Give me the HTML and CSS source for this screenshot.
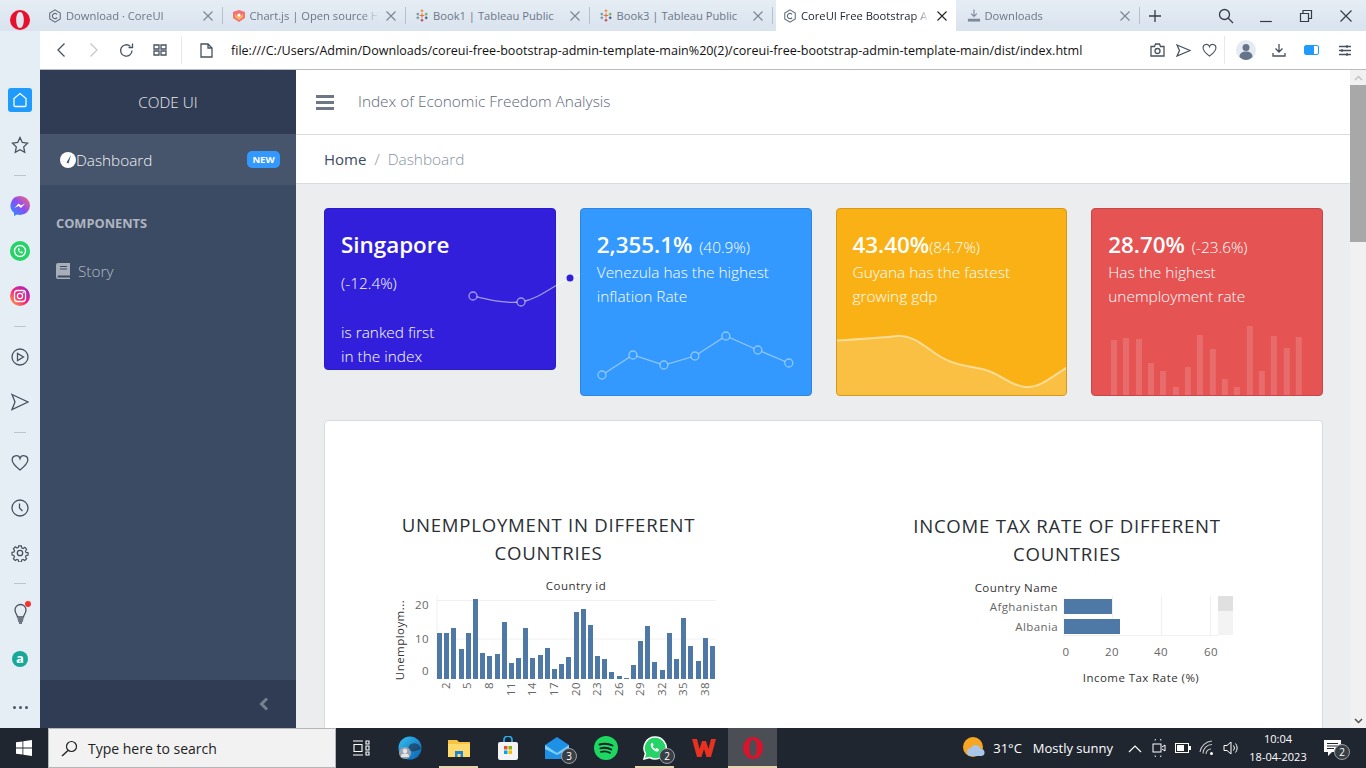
FILE: index.html
```html
<!DOCTYPE html>
<html lang="en">
<head>
    <meta charset="UTF-8">
    <meta name="viewport" content="width=device-width, initial-scale=1.0">
    <title>CoreUI Free Bootstrap Admin Template</title>
    <link rel="stylesheet" href="styles.css">
</head>
<body>
<div class="desktop">

    <!-- browser tabs -->
    <div class="tabbar">
        <div class="logo-slot">
            <svg width="20" height="20" viewBox="0 0 20 20"><path fill-rule="evenodd" fill="#e8112d" d="M10 0a10 10 0 1 0 0 20 10 10 0 0 0 0-20zm0 2c2.400 0 3.800 3.500 3.800 8s-1.400 8-3.800 8-3.800-3.500-3.800-8 1.400-8 3.800-8z"/></svg>
        </div>
        <div class="tab">
            <svg class="fav" width="16" height="16" viewBox="0 0 16 16"><path d="M8 1l6 3.500v7L8 15l-6-3.500v-7z" fill="none" stroke="#5f6b7a" stroke-width="1.200"/><path d="M10.400 6.200a3 3 0 1 0 0 3.600" fill="none" stroke="#5f6b7a" stroke-width="1.300"/></svg>
            <span class="tab-title">Download · CoreUI</span>
            <svg class="tab-x" width="10" height="10" viewBox="0 0 10 10"><path d="M.5.5l9 9M9.500.5l-9 9"/></svg>
        </div>
        <div class="tab">
            <svg class="fav" width="14" height="14" viewBox="0 0 14 14"><path d="M1 3l6-2 6 2v6l-6 4-6-4z" fill="#f27173"/><path d="M3 5l2 2 2-2 2 2 2-2v3l-4 3-4-3z" fill="#fdb45c"/><circle cx="7" cy="6" r="1.600" fill="#fff"/></svg>
            <span class="tab-title">Chart.js | Open source H</span>
            <svg class="tab-x" width="10" height="10" viewBox="0 0 10 10"><path d="M.5.5l9 9M9.500.5l-9 9"/></svg>
        </div>
        <div class="tab">
            <svg class="fav" width="15" height="15" viewBox="0 0 15 15"><path d="M7.500 1v3M6 2.500h3" stroke="#e8762d"/><path d="M7.500 5v5M5 7.500h5" stroke="#e8762d" stroke-width="1.200"/><path d="M7.500 11v3M6 12.500h3" stroke="#c72037"/><path d="M3 4.500v3M1.500 6h3M3 8.500v3M1.500 10h3" stroke="#5b879b"/><path d="M12 4.500v3M10.500 6h3" stroke="#59a14f"/><path d="M12 8.500v3M10.500 10h3" stroke="#1f447e"/></svg>
            <span class="tab-title tab-title-full">Book1 | Tableau Public</span>
            <svg class="tab-x" width="10" height="10" viewBox="0 0 10 10"><path d="M.5.5l9 9M9.500.5l-9 9"/></svg>
        </div>
        <div class="tab">
            <svg class="fav" width="15" height="15" viewBox="0 0 15 15"><path d="M7.500 1v3M6 2.500h3" stroke="#e8762d"/><path d="M7.500 5v5M5 7.500h5" stroke="#e8762d" stroke-width="1.200"/><path d="M7.500 11v3M6 12.500h3" stroke="#c72037"/><path d="M3 4.500v3M1.500 6h3M3 8.500v3M1.500 10h3" stroke="#5b879b"/><path d="M12 4.500v3M10.500 6h3" stroke="#59a14f"/><path d="M12 8.500v3M10.500 10h3" stroke="#1f447e"/></svg>
            <span class="tab-title tab-title-full">Book3 | Tableau Public</span>
            <svg class="tab-x" width="10" height="10" viewBox="0 0 10 10"><path d="M.5.5l9 9M9.500.5l-9 9"/></svg>
        </div>
        <div class="tab tab-active">
            <svg class="fav" width="16" height="16" viewBox="0 0 16 16"><path d="M8 1l6 3.500v7L8 15l-6-3.500v-7z" fill="none" stroke="#5f6b7a" stroke-width="1.200"/><path d="M10.400 6.200a3 3 0 1 0 0 3.600" fill="none" stroke="#5f6b7a" stroke-width="1.300"/></svg>
            <span class="tab-title">CoreUI Free Bootstrap Ac</span>
            <svg class="tab-x" width="10" height="10" viewBox="0 0 10 10"><path d="M.5.5l9 9M9.500.5l-9 9"/></svg>
        </div>
        <div class="tab">
            <svg class="fav" width="15" height="15" viewBox="0 0 15 15"><path d="M7.500 1v7M4.500 5.500l3 3 3-3" fill="none" stroke="#7d8a99" stroke-width="1.200"/><rect x="1" y="11" width="13" height="3" fill="#7d8a99"/></svg>
            <span class="tab-title">Downloads</span>
            <svg class="tab-x" width="10" height="10" viewBox="0 0 10 10"><path d="M.5.5l9 9M9.500.5l-9 9"/></svg>
        </div>
        <span class="tab-new">
            <svg width="14" height="14" viewBox="0 0 14 14"><path d="M7 1v12M1 7h12" stroke="#333c47" stroke-width="1.300"/></svg>
        </span>
        <div class="win-controls">
            <span class="win-btn"><svg width="16" height="16" viewBox="0 0 16 16"><circle cx="6.500" cy="6.500" r="5" fill="none" stroke="#333c47" stroke-width="1.300"/><path d="M10 10l5 5" stroke="#333c47" stroke-width="1.300"/></svg></span>
            <span class="win-btn"><svg width="14" height="14" viewBox="0 0 14 14"><path d="M1 12.500h12" stroke="#333c47" stroke-width="1.200"/></svg></span>
            <span class="win-btn"><svg width="14" height="14" viewBox="0 0 14 14"><path d="M1.500 4.500h8v8h-8zM4 4.500V1.500h8.500v8h-3" fill="none" stroke="#333c47" stroke-width="1.200"/></svg></span>
            <span class="win-btn"><svg width="14" height="14" viewBox="0 0 14 14"><path d="M1.500 1.500l11 11M12.500 1.500l-11 11" stroke="#333c47" stroke-width="1.200"/></svg></span>
        </div>
    </div>

    <!-- opera side rail -->
    <div class="rail">
        <span class="rail-item"><span class="rail-home"><svg width="16" height="16" viewBox="0 0 16 16"><path d="M8 1.500l6 5v7a1 1 0 0 1-1 1H3a1 1 0 0 1-1-1v-7z" fill="none" stroke="#fff" stroke-width="1.300"/></svg></span></span>
        <span class="rail-item"><svg width="18" height="18" viewBox="0 0 18 18"><path d="M9 1.500l2.300 5 5.200.7-3.800 3.700 1 5.400L9 13.700l-4.700 2.600 1-5.400L1.500 7.200l5.200-.7z" class="ico"/></svg></span>
        <span class="rail-sep"></span>
        <span class="rail-item"><svg width="20" height="20" viewBox="0 0 20 20"><defs><linearGradient id="msg" x1="0" y1="1" x2="1" y2="0"><stop offset="0" stop-color="#1e9bfc"/><stop offset=".5" stop-color="#8a4cf5"/><stop offset="1" stop-color="#ff6a6f"/></linearGradient></defs><path d="M10 0a10 9.500 0 0 1 0 19l-3-.4L4 20v-3.200A9.500 9.500 0 0 1 10 0z" fill="url(#msg)"/><path d="M4.500 12l4-4.500 2.500 2 4-2-4 4.500-2.500-2z" fill="#fff"/></svg></span>
        <span class="rail-item"><svg width="20" height="20" viewBox="0 0 20 20"><circle cx="10" cy="10" r="10" fill="#25d366"/><circle cx="10" cy="10" r="5.500" fill="none" stroke="#fff" stroke-width="1.400"/><path d="M7.800 7.500c0 3 2 4.800 4.600 5l.6-1.500-1.500-.8-.7.700c-.8-.4-1.300-1-1.600-1.700l.7-.7-.8-1.600z" fill="#fff"/></svg></span>
        <span class="rail-item"><svg width="20" height="20" viewBox="0 0 20 20"><defs><linearGradient id="ig" x1="0" y1="1" x2="1" y2="0"><stop offset="0" stop-color="#fdb03c"/><stop offset=".5" stop-color="#f0207f"/><stop offset="1" stop-color="#8a2fd8"/></linearGradient></defs><circle cx="10" cy="10" r="10" fill="url(#ig)"/><rect x="4.500" y="4.500" width="11" height="11" rx="3" fill="none" stroke="#fff" stroke-width="1.300"/><circle cx="10" cy="10" r="2.600" fill="none" stroke="#fff" stroke-width="1.300"/><circle cx="13.200" cy="6.800" r=".8" fill="#fff"/></svg></span>
        <span class="rail-sep"></span>
        <span class="rail-item"><svg width="18" height="18" viewBox="0 0 18 18"><circle cx="9" cy="9" r="8" class="ico"/><path d="M6.500 5.500v7l6-3.500z" class="ico"/></svg></span>
        <span class="rail-item"><svg width="18" height="18" viewBox="0 0 18 18"><path d="M1 1.500l16 7.500-16 7.500 3-7.500z" class="ico"/></svg></span>
        <span class="rail-sep"></span>
        <span class="rail-item"><svg width="18" height="18" viewBox="0 0 18 18"><path d="M9 16C4 12 1.200 9.500 1.200 6A4 4 0 0 1 9 4.500 4 4 0 0 1 16.800 6C16.800 9.500 14 12 9 16z" class="ico"/></svg></span>
        <span class="rail-item"><svg width="18" height="18" viewBox="0 0 18 18"><circle cx="9" cy="9" r="8" class="ico"/><path d="M8.500 4.500V9l3 3" class="ico"/></svg></span>
        <span class="rail-item"><svg width="18" height="18" viewBox="0 0 18 18"><circle cx="9" cy="9" r="2.700" class="ico"/><path d="M7.500 1h3l.4 2.300 1.500.7 2-1.300 2 2.200-1.300 1.900.6 1.500 2.300.5v2.500l-2.300.6-.6 1.500 1.300 1.900-2 2-2-1.200-1.500.6-.4 2.300h-3l-.4-2.300-1.500-.6-2 1.200-2-2 1.300-1.900-.6-1.500L.1 11V8.300l2.300-.5.6-1.500-1.300-1.900 2-2.200 2 1.300 1.500-.7z" class="ico" transform="translate(.9 .9) scale(.9)"/></svg></span>
        <span class="rail-sep"></span>
        <span class="rail-item rail-bulb"><svg width="16" height="22" viewBox="0 0 16 22"><path d="M5.500 14c0-2-2.500-3.500-2.500-7a5.500 5.500 0 0 1 11 0c0 3.500-2.500 5-2.500 7z" class="ico"/><path d="M5.500 16h6M6 18h5M7 20h3" class="ico"/></svg><span class="bulb-dot"></span></span>
        <span class="rail-item"><span class="rail-aria">a</span></span>
        <span class="rail-item rail-more"><span></span><span></span><span></span></span>
    </div>

    <!-- address bar -->
    <div class="addrbar">
        <span class="addr-btn"><svg width="10" height="16" viewBox="0 0 10 16"><path d="M8.500 1.500L2 8l6.500 6.500" class="ico"/></svg></span>
        <span class="addr-btn"><svg width="10" height="16" viewBox="0 0 10 16"><path d="M1.500 1.500L8 8l-6.500 6.500" fill="none" stroke="#c4c8cd" stroke-width="1.300"/></svg></span>
        <span class="addr-btn"><svg width="15" height="15" viewBox="0 0 15 15"><path d="M13 7.500a5.700 5.700 0 1 1-1.700-4.100" class="ico"/><path d="M13.500 .5v4h-4" class="ico"/></svg></span>
        <span class="addr-btn"><svg width="14" height="12" viewBox="0 0 14 12"><path d="M1 1h5v4H1zM8 1h5v4H8zM1 7h5v4H1zM8 7h5v4H8z" class="ico"/></svg></span>
        <span class="addr-sep"></span>
        <svg class="addr-file" width="13" height="15" viewBox="0 0 13 15"><path d="M1 1h7l4 4v9H1zM8 1v4h4" class="ico"/></svg>
        <span class="addr-url">file:///C:/Users/Admin/Downloads/coreui-free-bootstrap-admin-template-main%20(2)/coreui-free-bootstrap-admin-template-main/dist/index.html</span>
        <div class="addr-right">
            <span class="addr-small"><svg width="15" height="14" viewBox="0 0 15 14"><path d="M1 3.500h3.500L5.500 1h4l1 2.500H14V13H1z" class="ico"/><circle cx="7.500" cy="8" r="2.500" class="ico"/></svg></span>
            <span class="addr-small"><svg width="15" height="13" viewBox="0 0 15 13"><path d="M1 1l13 5.500L1 12l2.500-5.500z" class="ico"/></svg></span>
            <span class="addr-small"><svg width="15" height="14" viewBox="0 0 18 17"><path d="M9 16C4 12 1.200 9.500 1.200 6A4 4 0 0 1 9 4.500 4 4 0 0 1 16.800 6C16.800 9.500 14 12 9 16z" class="ico"/></svg></span>
            <span class="addr-sep addr-sep-right"></span>
            <span class="addr-btn"><svg width="20" height="20" viewBox="0 0 20 20"><circle cx="10" cy="10" r="10" fill="#e4ebf2"/><circle cx="10" cy="7.500" r="3.500" fill="#66748a"/><path d="M3.500 17c0-4 3-5.500 6.500-5.500s6.500 1.500 6.500 5.500c-2 2-4 3-6.500 3s-4.500-1-6.500-3z" fill="#66748a"/></svg></span>
            <span class="addr-btn"><svg width="14" height="14" viewBox="0 0 14 14"><path d="M7 1v8M3.500 5.500L7 9l3.500-3.500M1 10v3h12v-3" class="ico"/></svg></span>
            <span class="addr-btn"><span class="batt"><span class="batt-fill"></span></span></span>
            <span class="addr-btn"><svg width="14" height="13" viewBox="0 0 14 13"><path d="M1 2.500h12M1 6.500h12M1 10.500h12M9 1v3M4 5v3M9 9v3" class="ico"/></svg></span>
        </div>
    </div>

    <!-- the page itself -->
    <div class="page">
        <aside class="sidebar">
            <div class="brand">CODE UI</div>
            <a class="nav-active">
                <svg width="16" height="16" viewBox="0 0 16 16"><circle cx="8" cy="8" r="8" fill="#fff"/><path d="M11 3L6.500 10.500l2 1z" fill="#46546c"/></svg>
                <span class="nav-label">Dashboard</span>
                <span class="badge">NEW</span>
            </a>
            <div class="nav-title">COMPONENTS</div>
            <a class="nav-link">
                <svg width="14" height="16" viewBox="0 0 14 16"><path d="M2 0h12v12.500H2.500a1 1 0 0 0 0 2H14V16H2a2 2 0 0 1-2-2V2a2 2 0 0 1 2-2z" fill="#a8aeb8"/><path d="M4 3.500h7M4 6h7" stroke="#3c4b64" stroke-width="1.200"/></svg>
                <span>Story</span>
            </a>
            <div class="sidebar-foot">
                <svg width="10" height="14" viewBox="0 0 10 14"><path d="M8 1.500L2.500 7 8 12.500" fill="none" stroke="#76808f" stroke-width="3"/></svg>
            </div>
        </aside>

        <main class="main">
            <header class="topbar">
                <span class="burger"><i></i><i></i><i></i></span>
                <span class="topbar-title">Index of Economic Freedom Analysis</span>
            </header>
            <nav class="crumbs">
                <span class="crumb-home">Home</span>
                <span class="crumb-sep">/</span>
                <span class="crumb-now">Dashboard</span>
            </nav>

            <div class="content">
                <div class="stats">
                    <div class="stat stat-indigo">
                        <div class="stat-head">Singapore</div>
                        <p class="stat-change">(-12.4%)</p>
                        <p class="stat-rank">is ranked first<br>in the index</p>
                        <svg class="stat-float" width="130" height="60" viewBox="0 0 130 60">
                            <path d="M24 25C38 28 55 33 72 31 90 28 105 14 121 7L132 3" fill="none" stroke="rgba(255,255,255,.55)" stroke-width="1.300"/>
                            <circle cx="24" cy="25" r="4" fill="#321fdb" stroke="rgba(255,255,255,.55)" stroke-width="1.300"/>
                            <circle cx="72" cy="31" r="4" fill="#321fdb" stroke="rgba(255,255,255,.55)" stroke-width="1.300"/>
                            <circle cx="121" cy="7" r="3.500" fill="#321fdb"/>
                        </svg>
                    </div>

                    <div class="stat stat-blue">
                        <div class="stat-head">2,355.1% <small>(40.9%)</small></div>
                        <p>Venezula has the highest<br>inflation Rate</p>
                        <svg class="stat-chart" viewBox="0 0 232 70" preserveAspectRatio="none">
                            <path d="M22 49L53 29 84 39 115 30 146 10 178 24 209 37" fill="none" stroke="rgba(255,255,255,.45)" stroke-width="1.300"/>
                            <g fill="#39f" stroke="rgba(255,255,255,.45)" stroke-width="1.300">
                                <circle cx="22" cy="49" r="4"/><circle cx="53" cy="29" r="4"/><circle cx="84" cy="39" r="4"/><circle cx="115" cy="30" r="4"/><circle cx="146" cy="10" r="4"/><circle cx="178" cy="24" r="4"/><circle cx="209" cy="37" r="4"/>
                            </g>
                        </svg>
                    </div>

                    <div class="stat stat-amber">
                        <div class="stat-head">43.40%<small class="tight">(84.7%)</small></div>
                        <p>Guyana has the fastest<br>growing gdp</p>
                        <svg class="stat-chart" viewBox="0 0 232 70" preserveAspectRatio="none">
                            <path d="M0 14.500C25 13 45 12 60 10 78 8 90 22 105 31 120 40 135 40 150 44 165 48 175 60 190 61 205 62 218 49 232 41V70H0z" fill="rgba(255,255,255,.2)"/>
                            <path d="M0 14.500C25 13 45 12 60 10 78 8 90 22 105 31 120 40 135 40 150 44 165 48 175 60 190 61 205 62 218 49 232 41" fill="none" stroke="rgba(255,255,255,.5)" stroke-width="2"/>
                        </svg>
                    </div>

                    <div class="stat stat-red">
                        <div class="stat-head">28.70% <small>(-23.6%)</small></div>
                        <p>Has the highest<br>unemployment rate</p>
                        <svg class="stat-chart" viewBox="0 0 232 70" preserveAspectRatio="none">
                            <path fill="rgba(255,255,255,.15)" d="M20 14h6v56h-6zM32 12h6v58h-6zM45 13h6v57h-6zM57 37h6v33h-6zM69 45h6v25h-6zM82 61h6v9h-6zM94 41h6v29h-6zM106 9h6v61h-6zM119 23h6v47h-6zM131 53h6v17h-6zM143 61h6v9h-6zM156 0h6v70h-6zM168 45h6v25h-6zM180 10h6v60h-6zM193 22h6v48h-6zM205 11h6v59h-6z"/>
                        </svg>
                    </div>
                </div>

                <section class="panel">
                    <div class="panel-col">
                        <h3 class="chart-title">UNEMPLOYMENT IN DIFFERENT COUNTRIES</h3>
                        <svg class="chart chart-left" width="350" height="130" viewBox="0 0 350 130">
                            <path d="M57 25v84M57 30.500h279M57 69h279" fill="none" stroke="#f0f0f0"/>
                            <path fill="#4e79a7" d="M57 63h5v46h-5zM64 63h5v46h-5zM71 58h5v51h-5zM79 79h5v30h-5zM86 63h5v46h-5zM93 29h5v80h-5zM100 83h5v26h-5zM107 86h5v23h-5zM115 84h5v25h-5zM122 52h5v57h-5zM129 93h5v16h-5zM136 88h5v21h-5zM143 58h5v51h-5zM150 88h5v21h-5zM158 85h5v24h-5zM165 78h5v31h-5zM172 99h5v10h-5zM179 94h5v15h-5zM186 87h5v22h-5zM194 42h5v67h-5zM201 39h5v70h-5zM208 55h5v54h-5zM215 86h5v23h-5zM222 89h5v20h-5zM229 102h5v7h-5zM237 106h5v3h-5zM244 108h5v1h-5zM251 95h5v14h-5zM258 71h5v38h-5zM265 56h5v53h-5zM272 92h5v17h-5zM280 100h5v9h-5zM287 63h5v46h-5zM294 89h5v20h-5zM301 48h5v61h-5zM308 76h5v33h-5zM316 91h5v18h-5zM323 68h5v41h-5zM330 76h5v33h-5z"/>
                            <text class="axis-title" x="196" y="20" text-anchor="middle">Country id</text>
                            <g class="axis-tick" text-anchor="end">
                                <text x="49" y="39">20</text>
                                <text x="49" y="73">10</text>
                                <text x="49" y="105">0</text>
                            </g>
                            <text class="axis-title" transform="translate(24 70) rotate(-90)" text-anchor="middle">Unemploym...</text>
                            <g class="axis-tick" text-anchor="end">
                                <text transform="translate(70 112) rotate(-90)">2</text>
                                <text transform="translate(91 112) rotate(-90)">5</text>
                                <text transform="translate(113 112) rotate(-90)">8</text>
                                <text transform="translate(135 112) rotate(-90)">11</text>
                                <text transform="translate(156 112) rotate(-90)">14</text>
                                <text transform="translate(178 112) rotate(-90)">17</text>
                                <text transform="translate(200 112) rotate(-90)">20</text>
                                <text transform="translate(221 112) rotate(-90)">23</text>
                                <text transform="translate(243 112) rotate(-90)">26</text>
                                <text transform="translate(264 112) rotate(-90)">29</text>
                                <text transform="translate(286 112) rotate(-90)">32</text>
                                <text transform="translate(307 112) rotate(-90)">35</text>
                                <text transform="translate(329 112) rotate(-90)">38</text>
                            </g>
                        </svg>
                    </div>
                    <div class="panel-col">
                        <h3 class="chart-title">INCOME TAX RATE OF DIFFERENT COUNTRIES</h3>
                        <svg class="chart chart-right" width="290" height="130" viewBox="0 0 290 130">
                            <path d="M104 26v43M152.500 26v40M201.500 26v40M250.500 26v40M104 65.500h154" fill="none" stroke="#f0f0f0"/>
                            <rect x="104" y="29" width="48" height="15" fill="#4e79a7"/>
                            <rect x="104" y="49" width="56" height="15" fill="#4e79a7"/>
                            <rect x="258" y="26" width="15" height="15" fill="#e0e0e0"/>
                            <rect x="258" y="41" width="15" height="24" fill="#f3f3f3"/>
                            <text class="axis-title" x="98" y="22" text-anchor="end">Country Name</text>
                            <g class="axis-tick" text-anchor="end">
                                <text x="98" y="41">Afghanistan</text>
                                <text x="98" y="61">Albania</text>
                            </g>
                            <g class="axis-tick" text-anchor="middle">
                                <text x="106" y="86">0</text>
                                <text x="152" y="86">20</text>
                                <text x="201" y="86">40</text>
                                <text x="251" y="86">60</text>
                            </g>
                            <text class="axis-title" x="181" y="112" text-anchor="middle">Income Tax Rate (%)</text>
                        </svg>
                    </div>
                </section>
            </div>
        </main>

        <div class="scrollbar">
            <span class="scroll-arrow"><svg width="9" height="6" viewBox="0 0 9 6"><path d="M1 5l3.500-3.500L8 5" fill="none" stroke="#c4c4c4" stroke-width="1.500"/></svg></span>
            <span class="scroll-thumb"></span>
            <span class="scroll-arrow scroll-down"><svg width="9" height="6" viewBox="0 0 9 6"><path d="M1 1l3.500 3.500L8 1" fill="none" stroke="#505050" stroke-width="1.500"/></svg></span>
        </div>
    </div>

    <!-- windows taskbar -->
    <footer class="taskbar">
        <span class="start"><svg width="16" height="16" viewBox="0 0 16 16"><path fill="#fff" d="M0 2.300L6.500 1.400v6.200H0zM7.300 1.300L16 0v7.600H7.300zM0 8.400h6.500v6.200L0 13.700zM7.300 8.400H16V16l-8.700-1.300z"/></svg></span>
        <div class="search">
            <svg width="17" height="17" viewBox="0 0 17 17"><circle cx="10.500" cy="6.500" r="5" fill="none" stroke="#222" stroke-width="1.200"/><path d="M7 10.500L1 16" stroke="#222" stroke-width="1.400"/></svg>
            <span>Type here to search</span>
        </div>
        <span class="task"><svg width="18" height="16" viewBox="0 0 18 16"><path d="M1 1h10M1 15h10M2 4.500h8v7H2zM14 1h3v3h-3zM14 6h3v4h-3zM14 12h3v3h-3z" fill="none" stroke="#fff" stroke-width="1.100"/></svg></span>
        <span class="task"><svg width="24" height="24" viewBox="0 0 24 24"><defs><linearGradient id="edge" x1="0" y1="0" x2="1" y2="1"><stop offset="0" stop-color="#35c1f1"/><stop offset="1" stop-color="#0a5fb4"/></linearGradient></defs><circle cx="12" cy="12" r="11.500" fill="url(#edge)"/><path d="M23 13c-1-5-6-7-10-5-3 1.500-3 5-1 6.500 3 2 6 .5 11-1.500z" fill="#1b2531" opacity=".55"/><circle cx="7" cy="17" r="6" fill="#9aa3ad"/><circle cx="7" cy="15" r="2.300" fill="#e3e6ea"/><path d="M3 21c0-3 2-3.500 4-3.500s4 .5 4 3.500z" fill="#e3e6ea"/></svg></span>
        <span class="task task-open"><svg width="22" height="20" viewBox="0 0 22 20"><path d="M0 2h9l2 2h11v15H0z" fill="#f6c343"/><path d="M0 6h22v13H0z" fill="#ffdb6e"/><path d="M7 19v-6h8v6h-2.500v-3h-3v3z" fill="#1f83d6"/></svg></span>
        <span class="task"><svg width="22" height="24" viewBox="0 0 22 24"><path d="M7 7V4a4 4 0 0 1 8 0v3" fill="none" stroke="#28a8ea" stroke-width="1.800"/><rect x="1" y="6" width="20" height="18" rx="2" fill="#f4f4f4"/><path fill="#f25022" d="M7 10h3.500v3.500H7z"/><path fill="#7fba00" d="M11.500 10H15v3.500h-3.500z"/><path fill="#00a4ef" d="M7 14.500h3.500V18H7z"/><path fill="#ffb900" d="M11.500 14.500H15V18h-3.500z"/></svg></span>
        <span class="task"><svg width="24" height="22" viewBox="0 0 24 22"><path d="M12 0l12 8v14H0V8z" fill="#1e90e6"/><path d="M0 8l12 8 12-8v4l-12 6-12-6z" fill="#7fd0fa"/></svg><b class="task-count">3</b></span>
        <span class="task"><svg width="24" height="24" viewBox="0 0 24 24"><circle cx="12" cy="12" r="12" fill="#1ed760"/><path d="M5.500 8.500c4.500-1.200 9-1 13 1M6.300 12.300c4-1 7.500-.8 11 1.200M7 15.800c3-.8 6-.6 8.800 1" fill="none" stroke="#15202b" stroke-width="1.900" stroke-linecap="round"/></svg></span>
        <span class="task task-open"><svg width="24" height="24" viewBox="0 0 24 24"><path d="M12 1a11 11 0 0 0-9.500 16.500L1 23l5.700-1.500A11 11 0 1 0 12 1z" fill="#25d366" stroke="#fff" stroke-width="1.500"/><path d="M8.500 7c-1.500 1.500-.8 4 1 6s4.500 3.500 6 2l.5-1.800-2.500-1.200-1 1c-1.300-.5-2.300-1.500-2.800-2.800l1-1-1.200-2.500z" fill="#fff"/></svg><b class="task-count">2</b></span>
        <span class="task"><svg width="24" height="20" viewBox="0 0 24 20"><path d="M0 1h5l2.500 10L10 3h4l2.500 8L19 1h5l-5 18h-4.500L12 11l-2.500 8H5z" fill="#e8321f"/></svg></span>
        <span class="task task-current"><svg width="20" height="24" viewBox="0 0 20 24"><path fill-rule="evenodd" fill="#d8132b" d="M10 1a10 11 0 1 0 0 22 10 11 0 0 0 0-22zm0 2.500c2.200 0 3.600 3.800 3.600 8.500s-1.400 8.500-3.600 8.500-3.600-3.800-3.600-8.500 1.400-8.500 3.600-8.500z"/></svg></span>

        <div class="tray">
            <svg class="tray-weather" width="24" height="24" viewBox="0 0 24 24"><circle cx="11" cy="11" r="10" fill="#f6a623"/><path d="M9 20a4 4 0 0 1 0-8 5 5 0 0 1 9.500 1 3.500 3.500 0 0 1 1 7z" fill="#a9c6e8"/></svg>
            <span class="tray-temp">31°C</span>
            <span class="tray-text">Mostly sunny</span>
            <span class="tray-icon"><svg width="14" height="9" viewBox="0 0 14 9"><path d="M1 8l6-6 6 6" fill="none" stroke="#fff" stroke-width="1.200"/></svg></span>
            <span class="tray-icon"><svg width="14" height="18" viewBox="0 0 14 18"><path d="M3 1.500a3 3 0 0 1 6 0M3 16.500a3 3 0 0 0 6 0" fill="none" stroke="#fff"/><rect x="1" y="5" width="8" height="8" fill="none" stroke="#fff"/><path d="M10 8l3-2v6l-3-2" fill="none" stroke="#fff"/></svg></span>
            <span class="tray-icon"><svg width="16" height="10" viewBox="0 0 16 10"><rect x=".5" y=".5" width="13" height="9" fill="none" stroke="#fff"/><rect x="2" y="2" width="7" height="6" fill="#fff"/><rect x="14" y="3" width="2" height="4" fill="#fff"/></svg></span>
            <span class="tray-icon"><svg width="16" height="16" viewBox="0 0 16 16"><path d="M1 12A13 13 0 0 1 13 1M4 13.500A9 9 0 0 1 13 4.500M7 14a5 5 0 0 1 5-5" fill="none" stroke="#c8c8c8" stroke-width="1.100"/><circle cx="12.500" cy="13.500" r="1.500" fill="#fff"/></svg></span>
            <span class="tray-icon"><svg width="17" height="14" viewBox="0 0 17 14"><path d="M1 4.500h3L8 1v12L4 9.500H1z" fill="none" stroke="#fff"/><path d="M10.500 4.500a4 4 0 0 1 0 5M12.500 2.500a7 7 0 0 1 0 9" fill="none" stroke="#fff"/></svg></span>
            <div class="clock"><span>10:04</span><span>18-04-2023</span></div>
            <span class="notif"><svg width="18" height="17" viewBox="0 0 18 17"><path d="M0 0h17v12H8l-4 4v-4H0z" fill="#fff"/><path d="M3 3.500h11M3 6h11M3 8.500h7" stroke="#1f2630"/></svg><b class="task-count">2</b></span>
        </div>
    </footer>
</div>
</body>
</html>
```

FILE: styles.css
```css
* { box-sizing: border-box; }
html, body { margin: 0; height: 100%; overflow: hidden; }
body { font-family: "Open Sans", "Noto Sans", sans-serif; color: #3c4b64; }
svg { display: block; flex: none; }
.ico { fill: none; stroke: #48525f; stroke-width: 1.3; }

.desktop { display: grid; grid-template-columns: 40px 1fr; grid-template-rows: 31px 39px 1fr 40px; height: 768px; }

/* tabs */
.tabbar { grid-column: 1 / -1; display: flex; align-items: stretch; background: linear-gradient(#e6edf4, #d9e3ee); font-size: 11.2px; }
.logo-slot { width: 40px; flex: none; display: flex; align-items: center; justify-content: center; padding-top: 8px; }
.tab { flex: 0 0 183.5px; min-width: 0; display: flex; align-items: center; gap: 4px; padding-left: 8px; padding-right: 11px; color: #6b7787; position: relative; }
.tab::after { content: ""; position: absolute; right: 1px; top: 7px; bottom: 7px; width: 1px; background: #b6bfca; }
.fav { width: 14px; }
.tab-title { flex: 1; min-width: 0; white-space: nowrap; -webkit-mask-image: linear-gradient(to right, #000 88%, transparent); mask-image: linear-gradient(to right, #000 88%, transparent); }
.tab-title-full { -webkit-mask-image: none; mask-image: none; }
.tab-x { fill: none; stroke: #7a8592; stroke-width: 1.1; margin-left: 4px; }
.tab-active { background: #fff; color: #20262d; margin: 0 1.500px 0 2px; flex-basis: 180px; padding-left: 7px; padding-right: 9px; }
.tab-active::after { display: none; }
.tab-active .tab-x { stroke: #222; }
.tab:nth-child(7) { padding-left: 9px; }
.tab-new { width: 28px; display: flex; align-items: center; justify-content: center; }
.win-controls { margin-left: auto; display: flex; }
.win-btn { width: 40px; display: flex; align-items: center; justify-content: center; }

/* rail */
.rail { grid-row: 2 / 4; background: #e5edf5; display: flex; flex-direction: column; padding-top: 46px; }
.rail-item { height: 45px; flex: none; display: flex; align-items: center; justify-content: center; position: relative; }
.rail-sep { height: 16px; flex: none; position: relative; }
.rail-sep::after { content: ""; position: absolute; left: 14px; width: 12px; top: 8px; height: 1px; background: #bcc6d1; }
.rail-home { width: 24px; height: 24px; border-radius: 3px; background: #1e9bfc; display: flex; align-items: center; justify-content: center; }
.bulb-dot { position: absolute; left: 25px; top: 10px; width: 6px; height: 6px; border-radius: 50%; background: #f9302f; }
.rail-aria { width: 16px; height: 16px; border-radius: 50%; background: #17a89a; color: #fff; font-size: 13px; font-weight: 700; line-height: 14px; text-align: center; }
.rail-more { margin-top: auto; height: 42px; gap: 3px; }
.rail-more span { width: 3px; height: 3px; border-radius: 50%; background: #4b5563; }

/* address bar */
.addrbar { background: #fff; border-bottom: 1px solid #b8bcc2; display: flex; align-items: center; padding: 0 5px 0 4px; }
.addr-btn { width: 33px; display: flex; align-items: center; justify-content: center; }
.addr-small { width: 26px; display: flex; align-items: center; justify-content: center; }
.addr-sep { width: 1px; height: 28px; background: #e6e8eb; margin-left: 5px; }
.addr-file { margin-left: 18px; }
.addr-url { margin-left: 18px; font-size: 12.55px; color: #111; white-space: nowrap; }
.addr-right { margin-left: auto; display: flex; align-items: center; }
.addr-sep-right { margin: 0 4px 0 2px; }
.batt { width: 15px; height: 10px; border-radius: 2px; background: #fff; border: 1px solid #1e9bfc; display: block; position: relative; }
.batt-fill { display: block; width: 9px; height: 8px; background: #1e9bfc; }

/* coreui page */
.page { display: flex; overflow: hidden; min-height: 0; }
.sidebar { width: 256px; flex: none; background: #3c4b64; color: #fff; display: flex; flex-direction: column; }
.brand { height: 64px; flex: none; background: #303c54; display: flex; align-items: center; justify-content: center; font-size: 15.3px; font-weight: 300; color: #e8eaee; }
.nav-active { height: 51px; flex: none; background: #46546c; display: flex; align-items: center; padding: 0 16px 0 20px; font-size: 15.3px; font-weight: 300; color: #f2f3f5; }
.nav-label { flex: 1; }
.badge { background: #39f; border-radius: 5px; color: #fff; font-size: 9.5px; font-weight: 700; height: 17px; width: 33px; text-align: center; line-height: 17px; }
.nav-title { font-size: 12.8px; font-weight: 700; color: rgba(255, 255, 255, .6); padding: 30px 16px 0; line-height: 17px; }
.nav-link { display: flex; align-items: center; gap: 8px; padding: 28px 16px 0; font-size: 15.3px; font-weight: 300; color: rgba(255, 255, 255, .62); line-height: 22px; }
.sidebar-foot { margin-top: auto; height: 48px; flex: none; background: #303c54; display: flex; align-items: center; justify-content: flex-end; padding-right: 27px; }

.main { flex: 1; min-width: 0; background: #ebedef; overflow: hidden; }
.topbar { height: 65px; background: #fff; border-bottom: 1px solid #d8dbe0; display: flex; align-items: center; padding: 0 0 1px 20px; }
.burger { width: 18px; display: flex; flex-direction: column; gap: 3px; padding-top: 1px; }
.burger i { height: 3px; background: #6d7786; display: block; }
.topbar-title { margin-left: 24px; font-size: 15.4px; font-weight: 300; color: #5c6778; }
.crumbs { height: 49px; background: #fff; border-bottom: 1px solid #d8dbe0; display: flex; align-items: center; gap: 8px; padding: 0 28px; font-size: 15.4px; font-weight: 300; }
.crumb-home { color: #3c4b64; font-weight: 400; font-size: 15px; }
.crumb-sep, .crumb-now { color: #8a93a2; }

.content { padding: 24px 27px 0 28px; }
.stats { display: grid; grid-template-columns: repeat(4, 1fr); gap: 24px; align-items: start; }
.stat { height: 188px; border-radius: 4px; border: 1px solid; color: #fff; padding: 20px 16px 0; position: relative; display: flex; flex-direction: column; overflow: hidden; }
.stat p { margin: 0; font-size: 15.4px; font-weight: 300; line-height: 24px; }
.stat-head { height: 32px; flex: none; font-size: 22.4px; font-weight: 600; line-height: 32px; white-space: nowrap; }
.stat-head small { font-size: 15.4px; font-weight: 300; margin-left: 1px; }
.stat-head small.tight { margin-left: 0; }
.stat-chart { width: calc(100% + 34px); height: 70px; margin: auto -17px -1px; }
.stat-indigo { background: #321fdb; border-color: #2c1cc4; height: 162px; overflow: visible; }
.stat .stat-change { margin-top: 11px; }
.stat .stat-rank { margin-top: 25px; }
.stat-float { position: absolute; left: 124px; top: 62px; overflow: visible; }
.stat-blue { background: #39f; border-color: #2d86e0; }
.stat-amber { background: #f9b115; border-color: #d19a1c; }
.stat-red { background: #e55353; border-color: #c4474c; }

.panel { margin-top: 24px; background: #fff; border: 1px solid #d8dbe0; border-radius: 4px; height: 500px; display: grid; grid-template-columns: 447px 512px; column-gap: 39px; padding-top: 90px; }
.chart-title { margin: 0 auto 3px; width: 340px; text-align: center; font-size: 18.6px; font-weight: 400; letter-spacing: .75px; line-height: 28px; color: #2a2f36; }
.panel-col:last-child .chart-title { margin-top: 1px; margin-bottom: 2px; }
.chart-left { margin-left: 55px; }
.chart-right { margin-left: 149px; }
.axis-title { font-size: 11.5px; fill: #333; letter-spacing: .45px; }
.axis-tick { font-size: 11.5px; fill: #666; letter-spacing: .4px; }

.scrollbar { width: 16px; flex: none; background: #f1f1f1; display: flex; flex-direction: column; }
.scroll-arrow { height: 15px; display: flex; align-items: center; justify-content: center; }
.scroll-thumb { height: 157px; background: #a8a8a8; }
.scroll-down { margin-top: auto; }

/* taskbar */
.taskbar { grid-column: 1 / -1; background: #1f2630; display: flex; align-items: stretch; color: #fff; font-size: 13px; }
.start { width: 48px; display: flex; align-items: center; justify-content: center; }
.search { width: 288px; background: #f2f2f2; border: 1px solid #b5b8bb; display: flex; align-items: center; gap: 10px; padding-left: 12px; color: #222; font-size: 14px; }
.task { width: 49px; display: flex; align-items: center; justify-content: center; position: relative; }
.task-open::after { content: ""; position: absolute; left: 5px; right: 5px; bottom: 0; height: 2px; background: #e8d3b0; }
.task-current { background: #4b4f55; }
.task-current::after { content: ""; position: absolute; left: 0; right: 0; bottom: 0; height: 2px; background: #e8d3b0; }
.task-count { position: absolute; right: 4px; bottom: 4px; width: 16px; height: 16px; border-radius: 50%; background: #3a3f46; border: 1px solid #9aa0a6; font-size: 10px; font-weight: 400; line-height: 14px; text-align: center; }

.tray { margin-left: auto; display: flex; align-items: center; padding-right: 13px; }
.tray-weather { margin-right: 7px; }
.tray-temp { margin-right: 11px; }
.tray-text { margin-right: 10px; }
.tray-icon { width: 24px; display: flex; align-items: center; justify-content: center; }
.clock { width: 68px; margin-left: 1px; margin-right: 1px; display: flex; flex-direction: column; align-items: center; font-size: 11px; line-height: 18px; }
.notif { width: 40px; position: relative; display: flex; align-items: center; justify-content: center; }
.notif .task-count { right: 3px; bottom: -3px; }
```
